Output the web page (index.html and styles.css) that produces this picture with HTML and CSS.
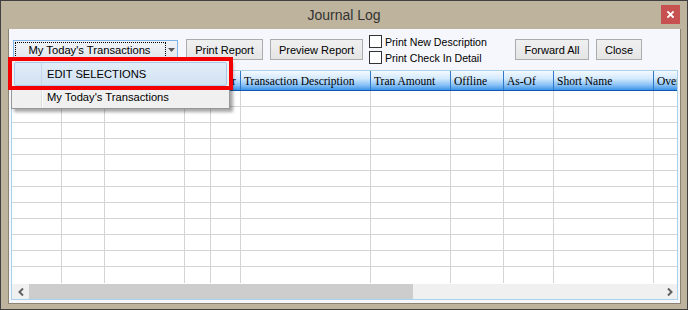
FILE: index.html
```html
<!DOCTYPE html>
<html>
<head>
<meta charset="utf-8">
<title>Journal Log</title>
<link rel="stylesheet" href="styles.css">
</head>
<body>
<div class="window">
  <div class="titlebar">
    <span></span>
    <span class="title">Journal Log</span>
    <button class="close-btn" aria-label="Close">
      <svg width="7" height="7" viewBox="0 0 7 7"><path d="M1 1L6 6M6 1L1 6" stroke="#fff" stroke-width="1.8" stroke-linecap="square"/></svg>
    </button>
  </div>
  <div class="client">
    <div class="toolbar">
      <div class="combo">
        <span class="combo-text">My Today's Transactions</span>
        <span class="combo-arrow"><svg width="7" height="4" viewBox="0 0 7 4"><path d="M0 0H7L3.5 4Z" fill="#5a5a5a"/></svg></span>
      </div>
      <button class="btn btn-print">Print Report</button>
      <button class="btn btn-preview">Preview Report</button>
      <div class="checks">
        <label class="check"><span class="box"></span>Print New Description</label>
        <label class="check"><span class="box"></span>Print Check In Detail</label>
      </div>
      <button class="btn btn-forward">Forward All</button>
      <button class="btn btn-close">Close</button>
    </div>
    <div class="grid">
      <div class="grid-head">
        <span class="hc c1"></span><span class="hc c2"></span><span class="hc c3"></span><span class="hc c4"></span><span class="hc c5">User</span><span class="hc c6">Transaction Description</span><span class="hc c7">Tran Amount</span><span class="hc c8">Offline</span><span class="hc c9">As-Of</span><span class="hc c10">Short Name</span><span class="hc c11">Override</span>
      </div>
      <div class="grid-body">
        <div class="row"><span class="c c1"></span><span class="c c2"></span><span class="c c3"></span><span class="c c4"></span><span class="c c5"></span><span class="c c6"></span><span class="c c7"></span><span class="c c8"></span><span class="c c9"></span><span class="c c10"></span><span class="c c11"></span></div>
        <div class="row"><span class="c c1"></span><span class="c c2"></span><span class="c c3"></span><span class="c c4"></span><span class="c c5"></span><span class="c c6"></span><span class="c c7"></span><span class="c c8"></span><span class="c c9"></span><span class="c c10"></span><span class="c c11"></span></div>
        <div class="row"><span class="c c1"></span><span class="c c2"></span><span class="c c3"></span><span class="c c4"></span><span class="c c5"></span><span class="c c6"></span><span class="c c7"></span><span class="c c8"></span><span class="c c9"></span><span class="c c10"></span><span class="c c11"></span></div>
        <div class="row"><span class="c c1"></span><span class="c c2"></span><span class="c c3"></span><span class="c c4"></span><span class="c c5"></span><span class="c c6"></span><span class="c c7"></span><span class="c c8"></span><span class="c c9"></span><span class="c c10"></span><span class="c c11"></span></div>
        <div class="row"><span class="c c1"></span><span class="c c2"></span><span class="c c3"></span><span class="c c4"></span><span class="c c5"></span><span class="c c6"></span><span class="c c7"></span><span class="c c8"></span><span class="c c9"></span><span class="c c10"></span><span class="c c11"></span></div>
        <div class="row"><span class="c c1"></span><span class="c c2"></span><span class="c c3"></span><span class="c c4"></span><span class="c c5"></span><span class="c c6"></span><span class="c c7"></span><span class="c c8"></span><span class="c c9"></span><span class="c c10"></span><span class="c c11"></span></div>
        <div class="row"><span class="c c1"></span><span class="c c2"></span><span class="c c3"></span><span class="c c4"></span><span class="c c5"></span><span class="c c6"></span><span class="c c7"></span><span class="c c8"></span><span class="c c9"></span><span class="c c10"></span><span class="c c11"></span></div>
        <div class="row"><span class="c c1"></span><span class="c c2"></span><span class="c c3"></span><span class="c c4"></span><span class="c c5"></span><span class="c c6"></span><span class="c c7"></span><span class="c c8"></span><span class="c c9"></span><span class="c c10"></span><span class="c c11"></span></div>
        <div class="row"><span class="c c1"></span><span class="c c2"></span><span class="c c3"></span><span class="c c4"></span><span class="c c5"></span><span class="c c6"></span><span class="c c7"></span><span class="c c8"></span><span class="c c9"></span><span class="c c10"></span><span class="c c11"></span></div>
        <div class="row"><span class="c c1"></span><span class="c c2"></span><span class="c c3"></span><span class="c c4"></span><span class="c c5"></span><span class="c c6"></span><span class="c c7"></span><span class="c c8"></span><span class="c c9"></span><span class="c c10"></span><span class="c c11"></span></div>
        <div class="row"><span class="c c1"></span><span class="c c2"></span><span class="c c3"></span><span class="c c4"></span><span class="c c5"></span><span class="c c6"></span><span class="c c7"></span><span class="c c8"></span><span class="c c9"></span><span class="c c10"></span><span class="c c11"></span></div>
        <div class="row last"><span class="c c1"></span><span class="c c2"></span><span class="c c3"></span><span class="c c4"></span><span class="c c5"></span><span class="c c6"></span><span class="c c7"></span><span class="c c8"></span><span class="c c9"></span><span class="c c10"></span><span class="c c11"></span></div>
      </div>
      <div class="hscroll">
        <span class="sb-btn"><svg width="6" height="8" viewBox="0 0 6 8"><path d="M5 0.5L1.5 4L5 7.5" fill="none" stroke="#606060" stroke-width="2"/></svg></span>
        <span class="sb-thumb"></span>
        <span class="sb-track"></span>
        <span class="sb-btn sb-right"><svg width="6" height="8" viewBox="0 0 6 8"><path d="M1 0.5L4.5 4L1 7.5" fill="none" stroke="#606060" stroke-width="2"/></svg></span>
      </div>
    </div>
  </div>
  <div class="menu">
    <div class="menu-item first active"><span class="gutter"></span><span class="mi-text">EDIT SELECTIONS</span></div>
    <div class="menu-item"><span class="gutter"></span><span class="mi-text">My Today's Transactions</span></div>
  </div>
  <div class="annotation"></div>
</div>
</body>
</html>
```
FILE: styles.css
```css
html, body {
  margin: 0;
  padding: 0;
  background: #beb49d;
}
body {
  font-family: "Liberation Sans", Arial, sans-serif;
  font-size: 11px;
  color: #000;
}
.window {
  position: relative;
  width: 688px;
  height: 310px;
  box-sizing: border-box;
  border: 1px solid #404040;
  background: #beb49d;
  display: flex;
  flex-direction: column;
  overflow: hidden;
}
.titlebar {
  height: 28px;
  flex: none;
  display: grid;
  grid-template-columns: 1fr auto 1fr;
  align-items: start;
}
.title {
  font-size: 14px;
  color: #333;
  line-height: 28px;
}
.close-btn {
  justify-self: end;
  margin: 4px 7px 0 0;
  width: 19px;
  height: 19px;
  padding: 0;
  border: none;
  background: #c75050;
  display: flex;
  align-items: center;
  justify-content: center;
}
.client {
  flex: 1;
  margin: 0 6px 5px 7px;
  background: #f6f7fc;
  border: 1px solid #8a8272;
  border-top: none;
  display: flex;
  flex-direction: column;
}
.toolbar {
  height: 33px;
  margin-top: 4px;
  padding-left: 4px;
  display: flex;
  align-items: center;
  flex: none;
}
.combo {
  position: relative;
  width: 165px;
  height: 20px;
  box-sizing: border-box;
  border: 1px solid #7eb4ea;
  background: linear-gradient(#f1f3f6, #e2e6ec);
  display: flex;
  align-items: center;
}
.combo::before {
  content: "";
  position: absolute;
  left: 1px;
  top: 1px;
  bottom: 1px;
  right: 11px;
  border: 1px dotted #000;
}
.combo-text {
  flex: 1;
  text-align: center;
  font-size: 11.2px;
  white-space: nowrap;
}
.combo-arrow {
  width: 12px;
  display: flex;
  justify-content: center;
  align-items: center;
  padding-top: 1px;
}
.btn {
  height: 21px;
  box-sizing: border-box;
  border: 1px solid #acacac;
  background: linear-gradient(#f0f0f0, #e5e5e5);
  font-family: "Liberation Sans", Arial, sans-serif;
  font-size: 11px;
  color: #000;
  padding: 0;
  flex: none;
}
.btn-print { margin-left: 8px; width: 77px; }
.btn-preview { margin-left: 7px; width: 93px; }
.btn-forward { width: 74px; }
.btn-close { margin-left: 7px; width: 46px; }
.checks {
  margin-left: 6px;
  width: 146px;
  display: flex;
  flex-direction: column;
  flex: none;
}
.check {
  height: 16px;
  display: flex;
  align-items: center;
  white-space: nowrap;
  font-size: 10.6px;
}
.box {
  width: 13px;
  height: 13px;
  box-sizing: border-box;
  border: 1px solid #333;
  background: #fff;
  margin-right: 3px;
  flex: none;
}
.grid {
  margin: 4px 0 0 2px;
  width: 667px;
  height: 230px;
  box-sizing: border-box;
  border: 1px solid #a9d2ea;
  background: #fff;
  display: flex;
  flex-direction: column;
  overflow: hidden;
  flex: none;
}
.grid-head {
  height: 20px;
  box-sizing: border-box;
  border-bottom: 1px solid #0d58ad;
  display: flex;
  flex: none;
}
.hc {
  flex: none;
  box-sizing: border-box;
  height: 19px;
  line-height: 20px;
  padding-left: 3px;
  border-right: 1px solid #2f78c8;
  background: linear-gradient(#f4faff 0%, #d3e9fd 40%, #86c0f6 75%, #3d94ea 100%);
  font-family: "Liberation Serif", "Times New Roman", serif;
  font-size: 11.5px;
  white-space: nowrap;
  overflow: hidden;
}
.grid-body {
  height: 192px;
  flex: none;
}
.row {
  display: flex;
  height: 16px;
  box-sizing: border-box;
  border-bottom: 1px solid #d4d4d4;
}
.row.last {
  border-bottom: none;
}
.c {
  flex: none;
  box-sizing: border-box;
  border-right: 1px solid #d4d4d4;
  height: 100%;
}
.c1 { width: 50px; }
.c2 { width: 43px; }
.c3 { width: 80px; }
.c4 { width: 26px; }
.c5 { width: 30px; }
.c6 { width: 130px; }
.c7 { width: 80px; }
.c8 { width: 53px; }
.c9 { width: 50px; }
.c10 { width: 100px; }
.c11 { width: 100px; }
.hscroll {
  height: 16px;
  margin-top: 1px;
  display: flex;
  background: #f0f0f0;
  flex: none;
}
.sb-btn {
  width: 17px;
  display: flex;
  align-items: center;
  justify-content: center;
  flex: none;
}
.sb-right {
  padding-left: 3px;
  box-sizing: border-box;
}
.sb-thumb {
  width: 384px;
  background: #cdcdcd;
  flex: none;
}
.sb-track { flex: 1; }
.menu {
  position: absolute;
  left: 10px;
  top: 58px;
  width: 219px;
  height: 50px;
  box-sizing: border-box;
  border: 1px solid #979797;
  background: #f0f0f0;
  padding: 2px 2px 1px;
  box-shadow: 3px 3px 3px rgba(0, 0, 0, 0.35);
  z-index: 5;
}
.menu-item {
  height: 22px;
  box-sizing: border-box;
  display: flex;
  align-items: center;
  border: 1px solid transparent;
}
.menu-item.first {
  height: 24px;
}
.menu-item.active {
  border-color: #a8c9ec;
  border-radius: 2px;
  background: linear-gradient(#e2edf8, #d2e2f2);
}
.gutter {
  width: 27px;
  height: 100%;
  box-sizing: border-box;
  border-right: 1px solid #dcdddd;
  box-shadow: 1px 0 0 #fff;
  flex: none;
}
.menu-item.active .gutter {
  border-right-color: #c4d6ea;
  box-shadow: none;
}
.mi-text {
  margin-left: 5px;
  font-size: 11.2px;
  white-space: nowrap;
}
.annotation {
  position: absolute;
  left: 7px;
  top: 56px;
  width: 225px;
  height: 33px;
  box-sizing: border-box;
  border: 4px solid #f40000;
  z-index: 6;
}
```
